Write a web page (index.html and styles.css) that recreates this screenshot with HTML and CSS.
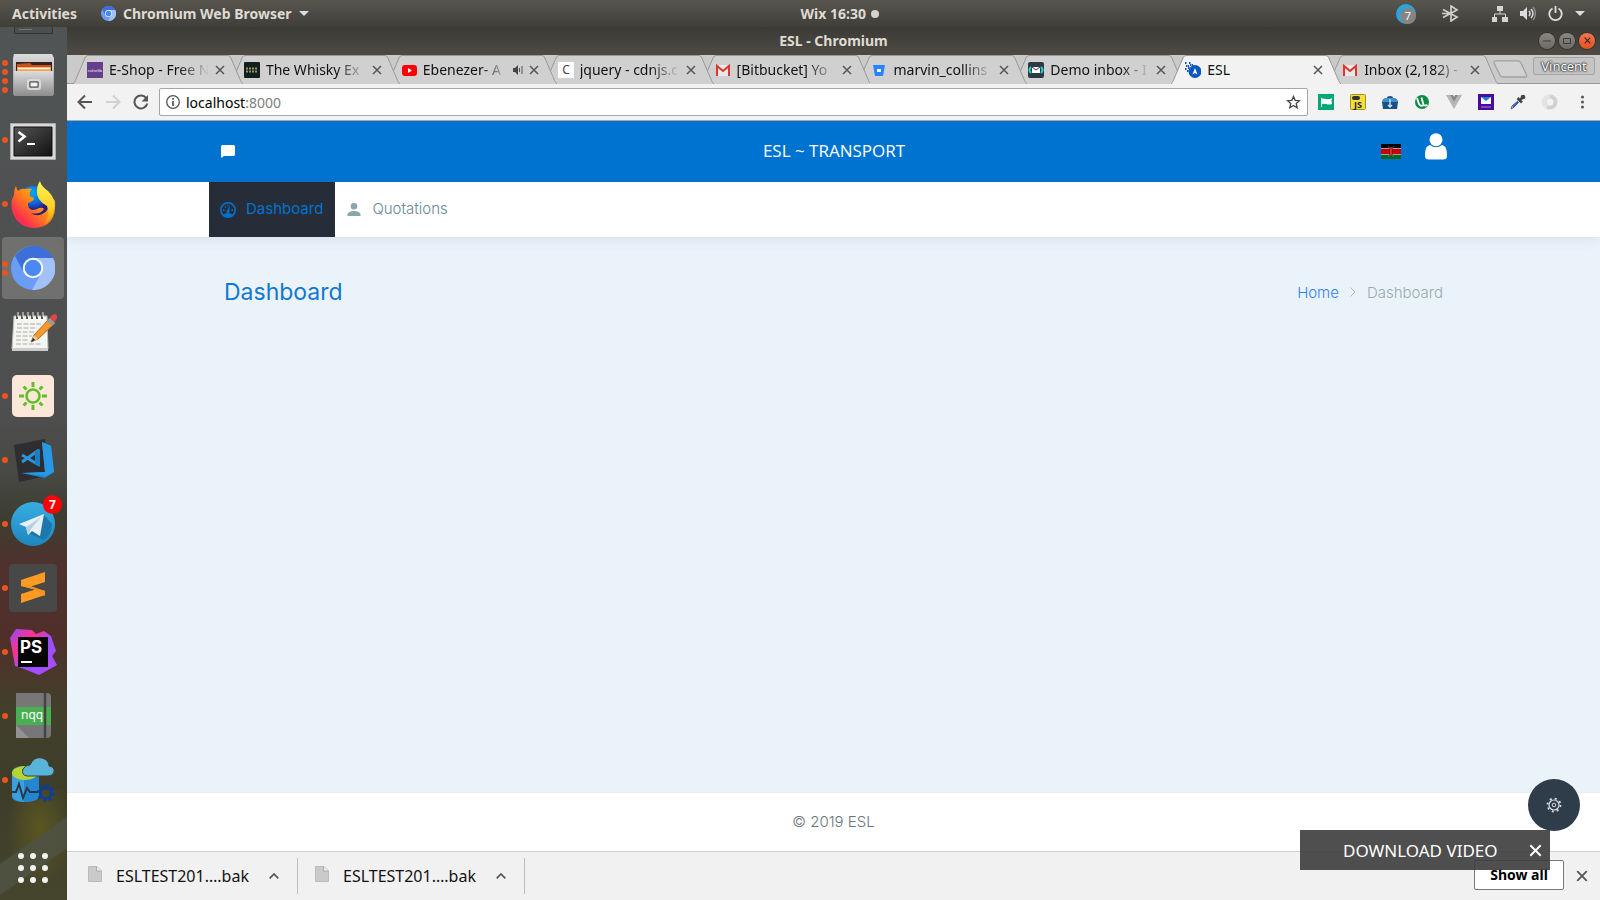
FILE: index.html
```html
<!DOCTYPE html>
<html lang="en">
<head>
<meta charset="utf-8">
<title>ESL</title>
<link rel="stylesheet" href="styles.css">
</head>
<body>
<svg class="defs" width="0" height="0" aria-hidden="true">
  <defs>
    <linearGradient id="metal" x2="0" y2="1"><stop stop-color="#dcdcdc"/><stop offset="1" stop-color="#8d8d8d"/></linearGradient>
    <linearGradient id="screen" x2="1" y2="1"><stop stop-color="#555"/><stop offset=".5" stop-color="#333"/><stop offset="1" stop-color="#111"/></linearGradient>
    <linearGradient id="fox" x1="1" y1="0" x2="0" y2="1"><stop stop-color="#ffe226"/><stop offset=".45" stop-color="#ff8a16"/><stop offset=".75" stop-color="#ff3647"/><stop offset="1" stop-color="#e31587"/></linearGradient>
    <linearGradient id="flame" x2="0" y2="1"><stop stop-color="#fff44f"/><stop offset=".6" stop-color="#ffd02a"/><stop offset="1" stop-color="#ff980e"/></linearGradient>
    <radialGradient id="globe" cy=".2"><stop stop-color="#00a9f5"/><stop offset=".6" stop-color="#0a6be0"/><stop offset="1" stop-color="#2b1d80"/></radialGradient>
    <linearGradient id="tg" x2="0" y2="1"><stop stop-color="#37aee2"/><stop offset="1" stop-color="#1e86bd"/></linearGradient>
    <linearGradient id="ps" x2="1" y2="1"><stop stop-color="#8a4dff"/><stop offset=".3" stop-color="#ff318c"/><stop offset=".55" stop-color="#9b4cff"/><stop offset="1" stop-color="#b04dff"/></linearGradient>
    <symbol id="x" viewBox="0 0 10 10"><path d="M1 1l8 8M9 1L1 9" fill="none" stroke="currentColor" stroke-width="1.5"/></symbol>
    <symbol id="tabshape" viewBox="0 0 170 29" preserveAspectRatio="none"><path d="M0 29C2 27 2 26 3 24L12 3Q13 .5 15 .5H155Q157 .5 158 3L167 24C168 26 168 27 170 29" stroke="#989898"/></symbol>
    <symbol id="gmail" viewBox="0 0 16 16"><path d="M2 3h12v11H2z" fill="#e8e8e8"/><path d="M2 14V4l6 5 6-5v10" fill="none" stroke="#e0342b" stroke-width="2"/></symbol>
    <symbol id="chromium" viewBox="0 0 44 44"><circle cx="22" cy="22" r="22" fill="#6a9df6"/><path d="M4 10A22 22 0 0 1 42 12L22 12 12 25Z" fill="#3d6fd8"/><path d="M22 12H42A22 22 0 0 1 21 44L31 26Z" fill="#a1c1f8"/><circle cx="22" cy="22" r="10.2" fill="#fff"/><circle cx="22" cy="22" r="8.3" fill="#4a89f3"/></symbol>
    <symbol id="file" viewBox="0 0 14 16"><path d="M.5.5H9L13.500 5V15.500H.5Z" fill="#cacaca" stroke="#bbb"/><path d="M8.500.5V5h5" fill="#eee" stroke="#aaa"/></symbol>
  </defs>
</svg>
<div class="desktop">
  <header class="topbar">
    <div class="topbar-left">
      <button>Activities</button>
      <button class="app-menu"><svg width="15" height="15"><use href="#chromium"/></svg>Chromium Web Browser<svg width="10" height="5" viewBox="0 0 10 5"><path d="M0 0h10L5 5z" fill="#ddd"/></svg></button>
    </div>
    <button class="clock">Wix 16:30<span class="clock-dot"></span></button>
    <div class="tray">
      <svg width="20" height="20" viewBox="0 0 20 20"><circle cx="10" cy="10" r="10" fill="#2ba5e0"/><circle cx="12" cy="12" r="8" fill="#858585"/><text x="12" y="16" text-anchor="middle" class="tray-num">7</text></svg>
      <svg class="bt" width="18" height="17" viewBox="0 0 18 17"><path d="M1 4.500L15 12 9 16V1L15 5 1 12.500M0 8.500H8" fill="none" stroke="#d0d0c8" stroke-width="1.700"/></svg>
      <svg class="net" width="16" height="16" viewBox="0 0 16 16"><path d="M5 0h6v5H5zM0 11h5v5H0zM10 11h6v5h-6z" fill="#d6d6d0"/><path d="M8 5v3M2.500 11V8h11v3" fill="none" stroke="#d6d6d0"/></svg>
      <svg width="16" height="15" viewBox="0 0 16 15"><path d="M0 5h3l4-4v13l-4-4H0z" fill="#ddd"/><path d="M9 5q2 2.500 0 5M11 3q4 4.500 0 9" fill="none" stroke="#ddd" stroke-width="1.500"/><path d="M13 1q5 6.500 0 13" fill="none" stroke="#888" stroke-width="1.500"/></svg>
      <svg width="15" height="15" viewBox="0 0 15 15"><path d="M4.500 2.500a6.200 6.200 0 1 0 6 0M7.500 0v7" fill="none" stroke="#ddd" stroke-width="1.800"/></svg>
      <svg width="10" height="5" viewBox="0 0 10 5"><path d="M0 0h10L5 5z" fill="#ddd"/></svg>
    </div>
  </header>
  <div class="workspace">
    <nav class="dock" aria-label="Dock">
      <div class="dock-cut"><svg width="40" height="7" viewBox="0 0 40 7"><path d="M.5 0V6.500h38V0" fill="#4c4f50" stroke="#333"/><path d="M5 2.500h13" stroke="#777"/></svg></div>
      <button class="dock-item" aria-label="Files"><span class="dots"><i></i><i></i><i></i><i></i></span>
        <svg width="48" height="48" viewBox="0 0 48 48"><path d="M5 2h38l2 4v37H4V6z" fill="url(#metal)"/><path d="M7 10h36v12H7z" fill="#322"/><path d="M8 12l13-1 2 2h19v8H8z" fill="#c8501e"/><path d="M8 15h34v5H8z" fill="#f5a04c"/><path d="M9 16.500h32" stroke="#fff3d8" stroke-width="1.500"/><path d="M5 19h39v25H5z" fill="url(#metal)"/><rect x="19" y="28" width="12" height="9" rx="2" fill="#aaa" stroke="#d9d9d9" stroke-width="2"/><path d="M21 30h8v5h-8z" fill="#f2f2f2" stroke="#444"/></svg></button>
      <button class="dock-item" aria-label="Terminal"><span class="dots"><i></i></span>
        <svg width="48" height="48" viewBox="0 0 48 48"><path d="M1.500 7.500h45v36h-45z" fill="#d9d9d9" stroke="#aaa"/><path d="M5 11h38v29H5z" fill="url(#screen)" stroke="#111"/><path d="M9.500 16l6 4.500-6 5" fill="none" stroke="#fff" stroke-width="2.600"/><path d="M18 28h8" stroke="#fff" stroke-width="2"/></svg></button>
      <button class="dock-item" aria-label="Firefox"><span class="dots"><i></i></span>
        <svg width="48" height="48" viewBox="0 0 48 48"><circle cx="24" cy="23" r="17" fill="url(#globe)"/><path d="M7 6Q8 10 9 11 12 8 16 9q5-1 7 0-3 3-2 7l4 2q0 3-6 5-1 5 4 7 4 0 7-2 4-1 5 1-4 6-13 4c6 5 17 1 18-8q0-6-2-9l5 1 3 4q2 27-22 27Q5 46 2.500 27 2 20 5 15 5 9 7 6Z" fill="url(#fox)"/><path d="M31 1q1 5 8 10 8 7 6 20-2 8-10 13 7-8 3-18Q27 20 28 11q0-6 3-10Z" fill="url(#flame)"/></svg></button>
      <button class="dock-item active" aria-label="Chromium"><span class="dots"><i></i><i></i></span>
        <svg width="44" height="44"><use href="#chromium"/></svg></button>
      <button class="dock-item" aria-label="Text Editor">
        <svg width="48" height="48" viewBox="0 0 48 48"><path d="M5 8h33l1 33H3z" fill="#f5f5f2" stroke="#bbb"/><path d="M3 40h36v3H3z" fill="#ccc"/><path d="M8 4v7M13 4v7M18 4v7M23 4v7M28 4v7M33 4v7" stroke="#555" stroke-width="2"/><path d="M9 4v5M14 4v5M19 4v5M24 4v5M29 4v5M34 4v5" stroke="#eee"/><path d="M8 16h24M8 20h20M7 24h18M7 28h16M7 32h12M7 36h26" stroke="#aaa" stroke-dasharray="5 1.500"/><path d="M22 34l3-7L41 10l5 5L29 31z" fill="#f39a2c" stroke="#b5651d"/><path d="M22 34l3-7 4 4z" fill="#e8c89a"/><path d="M22 34l2-4 2 2z" fill="#222"/><path d="M38 13l3-3 5 5-3 3z" fill="#999"/><path d="M41 9q4-5 8-1l-3 6z" fill="#e9404a"/></svg></button>
      <button class="dock-item" aria-label="Brightness"><span class="dots"><i></i></span>
        <svg width="48" height="48" viewBox="0 0 48 48"><rect x="3" y="3" width="42" height="42" rx="5" fill="#fde7d8"/><circle cx="24" cy="24" r="6.500" fill="none" stroke="#5fbf2a" stroke-width="2.600"/><g stroke="#5fbf2a" stroke-width="3"><path d="M24 10v5M24 33v5M10 24h5M33 24h5M14.500 14.500l3 3M30.500 30.500l3 3M33.500 14.500l-3 3M17.500 30.500l-3 3"/></g></svg></button>
      <button class="dock-item" aria-label="Visual Studio Code"><span class="dots"><i></i></span>
        <svg width="48" height="48" viewBox="0 0 48 48"><path d="M5 9l31-6 2 37-28 6z" fill="#2e2e31"/><path d="M33 6l9 4 3 26-9 6-24-5 24-1z" fill="#1b87d3"/><path d="M33 6l3 30-21 1 22 3 8-4-3-26z" fill="#2998e4"/><path d="M30 14L13 26M13 19l17 10" fill="none" stroke="#2a93dc" stroke-width="3"/><path d="M26 16l5-3v18l-5-3z" fill="#1c7dc4"/></svg></button>
      <button class="dock-item" aria-label="Telegram, 7 new"><span class="dots"><i></i></span>
        <svg width="44" height="44" viewBox="0 0 44 44"><circle cx="22" cy="22" r="22" fill="url(#tg)"/><path d="M33 13l8 9q0 10-8 16L17 31z" fill="#1c78aa"/><path d="M8 22l25-10-4 22-8-5-4 4-2-8z" fill="#e8f0f7"/><path d="M15 25l15-10-10 12-3 6z" fill="#b7cfe0"/></svg><b class="badge">7</b></button>
      <button class="dock-item" aria-label="Sublime Text"><span class="dots"><i></i></span>
        <svg width="48" height="48" viewBox="0 0 48 48"><rect width="48" height="48" rx="4" fill="#484848"/><path d="M12 16L36 8V18L22 22.500 36 27V31L12 39V30L26 25.500 12 22Z" fill="#ff9b22"/><path d="M12 22l10 .5L36 27v5l-10-6.500z" fill="#f7921a"/></svg></button>
      <button class="dock-item" aria-label="PhpStorm"><span class="dots"><i></i></span>
        <svg width="48" height="48" viewBox="0 0 48 48"><path d="M1 10L7 1l16 1 4 4 8-3 7 5 5 15-4 5 5 9-18 10-15-6L6 38z" fill="url(#ps)"/><path d="M9 9h30v30H9z" fill="#050505"/><path d="M12 34h11" stroke="#fff" stroke-width="2"/><text x="11" y="25" class="ps-text">PS</text></svg></button>
      <button class="dock-item" aria-label="nqq"><span class="dots"><i></i></span>
        <svg width="48" height="48" viewBox="0 0 48 48"><path d="M7 1h31q4 0 4 4v37q0 4-4 4H7z" fill="#777"/><path d="M7 33l13 13H7z" fill="#929292"/><path d="M7 15h35v18H7z" fill="#48b050"/><path d="M36 1v45" stroke="#444" stroke-width="2.500"/><text x="12" y="27" class="nqq-text">nqq</text></svg></button>
      <button class="dock-item" aria-label="Azure Data Studio"><span class="dots"><i></i></span>
        <svg width="48" height="48" viewBox="0 0 48 48"><path d="M3 17q0-7 13-7t14 7v22q0 7-14 7T3 39z" fill="#2486cf"/><path d="M3 17h12v29Q3 45 3 39z" fill="#3c9fe0"/><ellipse cx="16" cy="17" rx="13" ry="7" fill="#b6d532"/><path d="M3 36h4l3-8 4 14 4-10 3 4h8" fill="none" stroke="#27384a" stroke-width="2"/><path d="M18 20q-6-1-4-7 2-4 7-4 4-9 12-7 7 2 7 8 6 1 5 6-1 4-6 4z" fill="#59b4d9" stroke="#3d4035"/><circle cx="37" cy="37" r="5.500" fill="none" stroke="#0a3f9a" stroke-width="2.500"/><circle cx="37" cy="37" r="7.500" fill="none" stroke="#0a3f9a" stroke-width="3" stroke-dasharray="2.500 3.400"/></svg></button>
      <button class="dock-apps" aria-label="Show Applications"><i></i><i></i><i></i><i></i><i></i><i></i><i></i><i></i><i></i></button>
    </nav>
    <main class="window">
      <div class="titlebar">
        <span class="title">ESL - Chromium</span>
        <div class="wm">
          <button aria-label="Minimize"><svg width="8" height="8"><path d="M0 4h8" stroke="#3a3a36"/></svg></button>
          <button aria-label="Maximize"><svg width="8" height="8"><path d="M.5 1.500h7v5h-7z" fill="none" stroke="#3a3a36"/></svg></button>
          <button class="wm-close" aria-label="Close"><svg width="7" height="7"><use href="#x"/></svg></button>
        </div>
      </div>
      <div class="tabs">
        <div class="tab-list">
          <div class="tab"><svg class="shape"><use href="#tabshape"/></svg><svg width="16" height="16" viewBox="0 0 16 16"><path d="M0 0h16v16H0z" fill="#663f8c"/><text x="8" y="10" text-anchor="middle" class="colorlib">colorlib</text></svg><span class="tab-title">E-Shop - Free N</span><button aria-label="Close tab"><svg width="10" height="10"><use href="#x"/></svg></button></div>
          <div class="tab"><svg class="shape"><use href="#tabshape"/></svg><svg width="16" height="16" viewBox="0 0 16 16"><rect width="16" height="16" rx="1" fill="#10201e"/><path d="M2 6.500h12M2 9.500h12" stroke="#a08f60" stroke-width="2" stroke-dasharray="2 1"/></svg><span class="tab-title">The Whisky Ex</span><button aria-label="Close tab"><svg width="10" height="10"><use href="#x"/></svg></button></div>
          <div class="tab"><svg class="shape"><use href="#tabshape"/></svg><svg width="16" height="16" viewBox="0 0 16 16"><rect x="1" y="3" width="15" height="11" rx="3" fill="red"/><path d="M7 6l4 2.500L7 11z" fill="#fff"/></svg><span class="tab-title">Ebenezer- A</span><svg width="10" height="10" viewBox="0 0 10 10"><path d="M0 3h2l3-3v10L2 7H0z" fill="#444"/><path d="M6.500 3v4M9 1v8" stroke="#555"/></svg><button aria-label="Close tab"><svg width="10" height="10"><use href="#x"/></svg></button></div>
          <div class="tab"><svg class="shape"><use href="#tabshape"/></svg><svg width="16" height="16" viewBox="0 0 16 16"><path d="M0 0h16v16H0z" fill="#fff"/><text x="8" y="12" text-anchor="middle" class="fav-c">C</text></svg><span class="tab-title">jquery - cdnjs.c</span><button aria-label="Close tab"><svg width="10" height="10"><use href="#x"/></svg></button></div>
          <div class="tab"><svg class="shape"><use href="#tabshape"/></svg><svg width="16" height="16"><use href="#gmail"/></svg><span class="tab-title">[Bitbucket] Yo</span><button aria-label="Close tab"><svg width="10" height="10"><use href="#x"/></svg></button></div>
          <div class="tab"><svg class="shape"><use href="#tabshape"/></svg><svg width="16" height="16" viewBox="0 0 16 16"><path d="M2 3h12l-2 11H4z" fill="#2684ff"/><path d="M6 7h4v3H6z" fill="#fff"/></svg><span class="tab-title">marvin_collins</span><button aria-label="Close tab"><svg width="10" height="10"><use href="#x"/></svg></button></div>
          <div class="tab"><svg class="shape"><use href="#tabshape"/></svg><svg width="16" height="16" viewBox="0 0 16 16"><rect width="16" height="16" rx="2" fill="#2d3945"/><path d="M3 5Q0 8 3 11M13 5q3 3 0 6" fill="none" stroke="#1fd6c8" stroke-width="2"/><path d="M4 5h8v6H4z" fill="#fff"/><path d="M4 5l4 3 4-3" fill="none" stroke="#2d3945"/></svg><span class="tab-title">Demo inbox - I</span><button aria-label="Close tab"><svg width="10" height="10"><use href="#x"/></svg></button></div>
          <div class="tab current"><svg class="shape"><use href="#tabshape"/></svg><svg width="16" height="16" viewBox="0 0 16 16"><circle cx="10" cy="9.500" r="6.500" fill="#0b55c4"/><path d="M0 1h2M4 1h2M1 4h3M0 7h2M5 3h3M2 9h2M3 6h2" stroke="#0b55c4" stroke-width="2" stroke-dasharray="1.500 .5"/><path d="M7.500 12.500L10 6l2.500 6.500L10 11z" fill="#fff"/></svg><span class="tab-title">ESL</span><button aria-label="Close tab"><svg width="10" height="10"><use href="#x"/></svg></button></div>
          <div class="tab"><svg class="shape"><use href="#tabshape"/></svg><svg width="16" height="16"><use href="#gmail"/></svg><span class="tab-title">Inbox (2,182) -</span><button aria-label="Close tab"><svg width="10" height="10"><use href="#x"/></svg></button></div>
        </div>
        <button class="new-tab" aria-label="New tab"><svg width="35" height="18" viewBox="0 0 35 18"><path d="M3 .8H25Q27 .8 28 3L33.500 15Q34 17 32 17H10Q8 17 7 15L1 3Q.5.8 3 .8Z" fill="#d2d2d2" stroke="#a0a0a0" stroke-width="1.300"/></svg></button>
        <button class="profile">Vincent</button>
      </div>
      <div class="toolbar">
        <button aria-label="Back"><svg width="16" height="16" viewBox="0 0 16 16"><path d="M15 8H2M8 1.500L1.500 8 8 14.500" fill="none" stroke="#555" stroke-width="2"/></svg></button>
        <button aria-label="Forward"><svg width="16" height="16" viewBox="0 0 16 16"><path d="M1 8h13M8 1.500L14.500 8 8 14.500" fill="none" stroke="#d0d0d0" stroke-width="2"/></svg></button>
        <button aria-label="Reload"><svg width="16" height="16" viewBox="0 0 16 16"><path d="M13.500 4.500A6.500 6.500 0 1 0 14.300 9.500" fill="none" stroke="#555" stroke-width="2"/><path d="M15 1v6.500H8.500z" fill="#555"/></svg></button>
        <div class="omnibox">
          <svg width="14" height="14" viewBox="0 0 14 14"><circle cx="7" cy="7" r="6.300" fill="none" stroke="#555" stroke-width="1.300"/><path d="M7 6v5M7 3v1.800" stroke="#555" stroke-width="1.700"/></svg>
          <a class="url" href="#">localhost<span>:8000</span></a>
          <button aria-label="Bookmark"><svg width="15" height="14" viewBox="0 0 15 14"><path d="M7.500 1.500L9.200 5.300 13.500 5.700 10.200 8.500 11.200 12.800 7.500 10.500 3.800 12.800 4.800 8.500 1.500 5.700 5.800 5.300Z" fill="none" stroke="#444" stroke-width="1.300"/></svg></button>
        </div>
        <div class="extensions">
          <button aria-label="Flag extension"><svg width="16" height="16"><path d="M0 0h16v16H0z" fill="#00a878"/><path d="M3.500 4v9" stroke="#fff"/><path d="M3 5q2-1 5 0 3 1 6-1-1 3 0 6-3 1-6 0-3-1-5 1z" fill="#fff"/></svg></button>
          <button aria-label="JavaScript switch"><svg width="16" height="16"><rect x=".5" y=".5" width="15" height="15" rx="1" fill="#f5dd3c" stroke="#a38f20"/><rect x="2" y="2" width="8" height="4" rx="2" fill="#333"/><text x="4" y="14" class="js-text">JS</text></svg></button>
          <button aria-label="Toolbox"><svg width="16" height="16"><path d="M0 8q1-4 5-4 0-2 3-2t3 2q4 0 5 4l-1 7H1z" fill="#1d4f80"/><path d="M0 8q1-4 5-4h6q4 0 5 4z" fill="#3e91cf"/><path d="M8 5v8M6 11l2 2 2-2" fill="none" stroke="#b8e4ff" stroke-width="1.500"/></svg></button>
          <button aria-label="Torrent"><svg width="16" height="16"><circle cx="8" cy="8" r="7" fill="#0b8a43"/><path d="M3 4l2 6q2 3 4.500 1L7.500 3.500M9.500 11q2 1 4 0" fill="none" stroke="#fff" stroke-width="1.800"/></svg></button>
          <button aria-label="Vue devtools"><svg width="16" height="16"><path d="M0 1h4l4 7 4-7h4L8 15z" fill="#b5b5b5"/><path d="M4 1h3l1 2 1-2h3L8 8z" fill="#858585"/></svg></button>
          <button aria-label="Mail"><svg width="16" height="16"><path d="M0 0h16v16H0z" fill="#4a0a9c"/><path d="M3 3h10v7H3z" fill="#fff"/><path d="M3 3h10L8 7z" fill="#1684d8"/><path d="M3 13h10" stroke="#a98ad0"/></svg></button>
          <button aria-label="Color picker"><svg width="16" height="16"><path d="M1 15l1-3 7-6 1 1-7 7z" fill="#cdd6ee" stroke="#667"/><path d="M3 13l5-5" stroke="#315fd0" stroke-width="2"/><path d="M7.500 4l4.500 4.500M10 6l4-4" stroke="#444" stroke-width="2.500"/><circle cx="13" cy="3" r="2.300" fill="#444"/></svg></button>
          <button aria-label="Sync"><svg width="16" height="16"><circle cx="8" cy="8" r="5.500" fill="none" stroke="#d0d0d0" stroke-width="4"/><path d="M8 2.500A5.500 5.500 0 0 0 5 13" fill="none" stroke="#e4e4e4" stroke-width="4"/></svg></button>
          <button aria-label="Menu"><svg width="16" height="16"><g fill="#555"><circle cx="8.500" cy="3" r="1.500"/><circle cx="8.500" cy="8" r="1.500"/><circle cx="8.500" cy="13" r="1.500"/></g></svg></button>
        </div>
      </div>
      <section class="page">
        <header class="site-header"><div class="container header-row">
          <button aria-label="Messages"><svg width="14" height="13" viewBox="0 0 14 13"><path d="M1.500 0h11Q14 0 14 1.500v8Q14 11 12.500 11H3L0 13V1.500Q0 0 1.500 0Z" fill="#fff"/></svg></button>
          <span class="brand">ESL ~ TRANSPORT</span>
          <div class="header-right">
            <a href="#" aria-label="Kenya"><svg width="20" height="15" viewBox="0 0 20 15"><path d="M0 0h20v4.500H0z" fill="#000"/><path d="M0 4.500h20v6H0z" fill="#c8000e"/><path d="M0 10.500h20V15H0z" fill="#006818"/><path d="M0 4.500h20M0 10.500h20" stroke="#bbb" stroke-width=".8"/><path d="M7.500 2l5 11M12.500 2l-5 11" stroke="#aaa" stroke-width=".5"/><ellipse cx="10" cy="7.500" rx="2" ry="4.500" fill="#900"/><path d="M10 3.500v8" stroke="#e88" stroke-width=".8"/></svg></a>
            <a class="user" href="#" aria-label="Account"><svg width="22" height="27" viewBox="0 0 22 27"><path d="M5 12Q11 16.500 17 12 22 13 22 21V23Q22 26.500 18 26.500H4Q0 26.500 0 23V21Q0 13 5 12Z" fill="#fff"/><circle cx="11" cy="6.700" r="6.500" fill="#fff"/></svg></a>
          </div>
        </div></header>
        <nav class="site-nav"><div class="container nav-row">
          <a class="selected" href="#"><svg width="16" height="16" viewBox="0 0 16 16"><circle cx="8" cy="8" r="7.200" fill="none" stroke="currentColor" stroke-width="1.600"/><path d="M3 13q5-4 10 0-5 4-10 0ZM7 9l3-5.500-1 6z" fill="currentColor"/><circle cx="8" cy="9.500" r="1.500" fill="currentColor"/><path d="M3 8h1.500M11.500 8H13M5 4.500l1 1M8 3v1.500" stroke="currentColor" stroke-width="1.300"/></svg><span>Dashboard</span></a>
          <a href="#"><svg width="16" height="14" viewBox="0 0 16 14"><circle cx="8" cy="3.300" r="3.300" fill="#8aa5ae"/><path d="M1.500 13v-2Q3 8 8 8t6.500 3v2z" fill="#8aa5ae"/></svg><span>Quotations</span></a>
        </div></nav>
        <div class="content"><div class="container content-row">
          <h1>Dashboard</h1>
          <div class="crumbs"><a href="#">Home</a><svg width="6" height="10" viewBox="0 0 6 10"><path d="M.5.5L5 5 .5 9.500" fill="none" stroke="#a9b9c2"/></svg><span>Dashboard</span></div>
        </div></div>
        <footer class="site-footer">© 2019 ESL</footer>
        <button class="fab" aria-label="Settings"><svg width="16" height="16" viewBox="0 0 16 16"><circle cx="8" cy="8" r="5" fill="none" stroke="#d5dbe0" stroke-width="1.200"/><circle cx="8" cy="8" r="6.500" fill="none" stroke="#d5dbe0" stroke-width="1.800" stroke-dasharray="2 3.105"/><circle cx="8" cy="8" r="1.800" fill="none" stroke="#d5dbe0"/></svg></button>
      </section>
      <div class="downloads">
        <div class="download"><svg width="14" height="16"><use href="#file"/></svg><span>ESLTEST201….bak</span><button aria-label="Options"><svg width="10" height="6" viewBox="0 0 10 6"><path d="M.7 5.300L5 1 9.300 5.300" fill="none" stroke="#555" stroke-width="1.700"/></svg></button></div>
        <div class="download"><svg width="14" height="16"><use href="#file"/></svg><span>ESLTEST201….bak</span><button aria-label="Options"><svg width="10" height="6" viewBox="0 0 10 6"><path d="M.7 5.300L5 1 9.300 5.300" fill="none" stroke="#555" stroke-width="1.700"/></svg></button></div>
        <button class="show-all">Show all</button>
        <button class="shelf-close" aria-label="Close downloads"><svg width="12" height="12"><use href="#x"/></svg></button>
      </div>
      <div class="video-popup"><a href="#">DOWNLOAD VIDEO</a><button aria-label="Dismiss"><svg width="13" height="13"><use href="#x"/></svg></button></div>
    </main>
  </div>
</div>
</body>
</html>
```
FILE: styles.css
```css
* { box-sizing: border-box; }
body { margin: 0; font-family: "Noto Sans", sans-serif; font-size: 14px; }
button { margin: 0; padding: 0; border: 0; background: none; color: inherit; font: inherit; display: flex; align-items: center; }
a { color: inherit; text-decoration: none; }
svg { display: block; flex: none; }
.defs { position: absolute; }
.desktop { display: flex; flex-direction: column; min-height: 100vh; }

.topbar { display: grid; grid-template-columns: 50% auto 1fr; align-items: center; height: 27px; padding-left: 1px; background: linear-gradient(#59564f, #3f3e39); color: #dfdbd2; font-weight: 700; }
.topbar-left { display: flex; gap: 24px; padding-left: 11px; }
.app-menu { gap: 7px; }
.clock { gap: 5px; }
.clock-dot { width: 8px; height: 8px; border-radius: 50%; background: #d5d2ca; }
.tray { display: flex; align-items: center; justify-content: flex-end; gap: 12px; padding-right: 15px; }
.tray .bt { margin-left: 14px; }
.tray .net { margin-left: 20px; }
.tray-num { font-size: 11px; fill: #fff; font-weight: 400; }

.workspace { flex: 1; display: flex; }
.dock { width: 67px; flex: none; display: flex; flex-direction: column;
  background:
    linear-gradient(145deg, transparent 46%, rgba(79, 82, 66, .9) 48%, rgba(79, 82, 66, .9) 66%, transparent 68%) 0 100% / 100% 110px no-repeat,
    radial-gradient(ellipse at 60% 35%, rgba(104, 96, 30, .7), transparent 60%) 0 100% / 100% 110px no-repeat,
    linear-gradient(#515455 0, #4d4e4d 45%, #484944 51%, #3c3e31 56%, #50312d 62%, #502f2b 70%, #42402b 78%, #3d3d2a 88%, #45442c 100%); }
.dock-cut { height: 17px; padding-left: 14px; }
.dock-item { position: relative; height: 64px; justify-content: center; padding-right: 1px; }
.dock-item.active::before { content: ""; position: absolute; inset: 1px 3px 1px 2px; border-radius: 4px; background: #70706e; }
.dock-item svg { position: relative; }
.dots { position: absolute; left: 2px; top: 0; bottom: 0; display: flex; flex-direction: column; justify-content: center; gap: 3px; }
.dots i { width: 6px; height: 6px; border-radius: 50%; background: #e95420; }
.badge { position: absolute; right: 5px; top: 3px; width: 19px; height: 19px; border-radius: 50%; background: #f00; color: #fff; font-size: 12px; line-height: 19px; text-align: center; }
.ps-text { font: 700 17px Inter, sans-serif; fill: #fff; }
.nqq-text { font: 12px "Noto Sans", sans-serif; fill: #fff; }
.dock-apps { display: grid; grid-template-columns: repeat(3, 6px); gap: 6px; justify-content: center; align-content: start; margin-top: 41px; padding-right: 1px; }
.dock-apps i { width: 6px; height: 6px; border-radius: 50%; background: #f2f2f0; }

.window { position: relative; flex: 1; min-width: 0; display: flex; flex-direction: column; }
.titlebar { display: grid; grid-template-columns: 1fr auto 1fr; align-items: center; height: 28px; padding-bottom: 1px; background: linear-gradient(#3b3a36, #4e4b45); color: #dfdbd2; font-weight: 700; }
.title { grid-column: 2; }
.wm { display: flex; justify-content: flex-end; gap: 4px; padding-right: 5px; }
.wm button { width: 16px; height: 16px; justify-content: center; border-radius: 50%; background: linear-gradient(#8a8880, #6b6962); box-shadow: 0 0 0 1px #33322e; }
.wm .wm-close { background: linear-gradient(#f37650, #e4511f); color: #3a2018; }

.tabs { display: flex; height: 29px; padding: 0 5px 0 6px; background: #cacaca; border-bottom: 1px solid #989898; }
.tab-list { display: flex; flex: 0 1 1412px; min-width: 0; }
.tab { position: relative; flex: 1 1 0; min-width: 0; height: 29px; display: flex; align-items: center; gap: 6px; padding: 0 5px 0 14px; }
.tab > * { position: relative; }
.tab .shape { position: absolute; left: 0; top: 0; width: calc(100% + 13px); height: 29px; fill: #d0d0d0; }
.tab button { color: #555; }
.tab-title { flex: 1; min-width: 0; overflow: hidden; white-space: nowrap; color: #111; mask-image: linear-gradient(to right, #000 70%, transparent); }
.tab:nth-child(1) { z-index: 9; }
.tab:nth-child(2) { z-index: 8; }
.tab:nth-child(3) { z-index: 7; }
.tab:nth-child(4) { z-index: 6; }
.tab:nth-child(5) { z-index: 5; }
.tab:nth-child(6) { z-index: 4; }
.tab:nth-child(7) { z-index: 3; }
.tab:nth-child(9) { z-index: 1; }
.tab.current { z-index: 10; }
.tab.current .shape { fill: #f2f2f2; }
.current .tab-title { mask-image: none; }
.new-tab { margin-left: 8px; }
.profile { align-self: flex-start; margin: 2px 0 0 auto; width: 62px; height: 18px; justify-content: center; border: 1px solid #a5a5a5; border-radius: 2px; background: #c4c4c4; color: #fff; font-size: 13px; text-shadow: 0 0 1px #222, 0 0 2px #222, 0 0 2px #333; }

.toolbar { display: flex; align-items: center; gap: 12px; height: 37px; padding: 0 10px; background: #f2f2f2; border-bottom: 1px solid #a8a8a8; }
.omnibox { flex: 1; display: flex; align-items: center; gap: 6px; height: 28px; margin-left: -2px; padding: 0 6px; background: #fff; border: 1px solid #a6a6a6; border-radius: 2px; }
.url { flex: 1; color: #000; }
.url span { color: #808080; }
.extensions { display: flex; gap: 16px; margin-left: -2px; }
.js-text { font: 700 9px "Noto Sans", sans-serif; fill: #222; }
.colorlib { font: 4px "Noto Sans", sans-serif; fill: #fff; }
.fav-c { font: 12px "Noto Sans", sans-serif; fill: #444; }

.page { position: relative; flex: 1; display: flex; flex-direction: column; font-family: Inter, "Open Sans", sans-serif; }
.container { width: 100%; max-width: 1249px; margin: 0 auto; }
.site-header { height: 61px; display: flex; align-items: center; background: #0073d1; color: #fff; }
.header-row { display: grid; grid-template-columns: 1fr auto 1fr; align-items: center; padding: 0 11px 0 12px; }
.brand { padding-bottom: 2px; font-size: 17px; font-family: "Open Sans", sans-serif; }
.header-right { display: flex; justify-content: flex-end; align-items: center; gap: 24px; }
.user { padding-bottom: 10px; }
.site-nav { position: relative; height: 55px; background: #fff; box-shadow: 0 2px 12px rgba(60, 100, 120, .12); }
.nav-row { display: flex; height: 55px; }
.nav-row a { display: flex; align-items: center; gap: 10px; padding: 0 11px; color: #668896; font-size: 15px; font-weight: 300; }
.nav-row span { padding-bottom: 2px; }
.nav-row .selected { padding-right: 12px; background: #262d38; color: #0073d1; font-weight: 400; }
.content { flex: 1; padding-top: 38px; background: #ebf3fa; }
.content-row { display: flex; justify-content: space-between; align-items: center; padding: 0 15px; }
h1 { margin: 0; font-size: 23px; line-height: 34px; font-weight: 400; color: #0f78d4; }
.crumbs { display: flex; align-items: center; gap: 11px; color: #99abb4; font-size: 15px; font-weight: 300; }
.crumbs a { color: #2b82fa; }
.site-footer { height: 59px; display: flex; align-items: center; justify-content: center; padding-bottom: 1px; background: #fff; border-top: 1px solid #e9edf0; color: #67757c; font-weight: 300; font-size: 15px; }
.fab { position: absolute; right: 20px; bottom: 20px; width: 52px; height: 52px; justify-content: center; border-radius: 50%; background: #2f3d4a; }

.downloads { display: flex; align-items: center; height: 49px; padding-right: 12px; background: #f1f1f1; border-top: 1px solid #cfcfcf; }
.download { display: flex; align-items: center; width: 227px; height: 36px; padding: 0 18px 0 17px; border-right: 1px solid #bdbdbd; gap: 14px; font-size: 16px; color: #111; }
.download:first-child { width: 231px; padding-left: 21px; }
.download > svg { margin-bottom: 4px; }
.download button { margin-left: auto; }
.show-all { width: 90px; height: 30px; margin: 0 12px 2px auto; padding-bottom: 2px; justify-content: center; border: 1px solid #777; border-radius: 2px; background: #fff; color: #000; font-weight: 700; }
.shelf-close { color: #555; }
.video-popup { position: absolute; right: 50px; bottom: 30px; width: 250px; height: 40px; display: flex; align-items: center; justify-content: space-between; padding: 0 8px 0 43px; background: rgba(60, 60, 60, .9); color: #fff; font-size: 17px; }
```
